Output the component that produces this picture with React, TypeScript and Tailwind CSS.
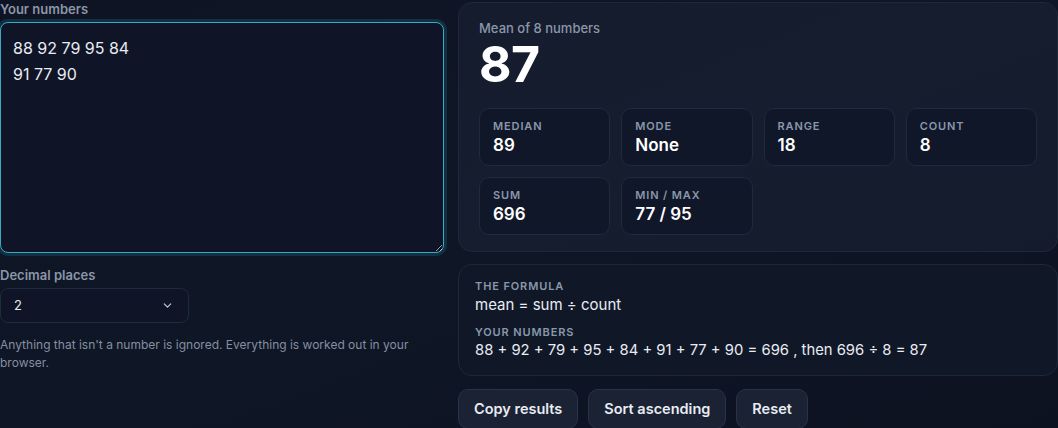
import { ChevronDown } from 'lucide-react'

const numbers = [88, 92, 79, 95, 84, 91, 77, 90]

const stats = [
  { label: 'Median', value: '89' },
  { label: 'Mode', value: 'None' },
  { label: 'Range', value: '18' },
  { label: 'Count', value: '8' },
  { label: 'Sum', value: '696' },
  { label: 'Min / Max', value: '77 / 95' },
]

function StatBox({ label, value }: { label: string; value: string }) {
  return (
    <div className="h-[58px] rounded-[10px] border border-[#1f2a3c] bg-[#0f1628]/80 px-[13px] pt-[10px]">
      <div className="text-[11px] font-semibold uppercase leading-[14px] tracking-[0.08em] text-[#8a97ab]">{label}</div>
      <div className="mt-[2px] text-[17px] font-semibold leading-[20px] text-white">{value}</div>
    </div>
  )
}

export default function App() {
  return (
    <div
      className="h-[428px] w-[1058px] overflow-hidden bg-gradient-to-br from-[#0e1423] via-[#0f1626] to-[#0c1220] text-white"
      style={{ fontFamily: 'Inter, "Noto Sans", sans-serif' }}
    >
      <div className="flex gap-[14px]">
        {/* left column */}
        <div className="w-[444px] shrink-0">
          <label className="block pt-[1px] text-[13px] font-semibold leading-[16px] text-[#8b96a8]">Your numbers</label>
          <textarea
            className="mt-[5px] block h-[231px] w-full resize-y rounded-[8px] border border-[#3aa9c4] bg-[#0f1526] px-[12px] pt-[12px] text-[16px] leading-[26px] text-[#e8ecf2] outline-none ring-[3px] ring-[#22d3ee]/15"
            defaultValue={'88 92 79 95 84\n91 77 90'}
          />
          <label className="mt-[14px] block text-[13px] font-semibold leading-[16px] text-[#8b96a8]">Decimal places</label>
          <div className="relative mt-[5px] flex h-[35px] w-[189px] items-center rounded-[8px] border border-[#1f2a3c] bg-[#0f1526] px-[13px]">
            <span className="text-[13px] text-[#e8ecf2]">2</span>
            <ChevronDown className="absolute right-[14px] top-[10px] h-[13px] w-[13px] text-[#c3cad6]" strokeWidth={2.2} />
          </div>
          <p className="mt-[13px] text-[12px] leading-[18px] text-[#848fa1]">
            Anything that isn't a number is ignored. Everything is worked out in your browser.
          </p>
        </div>

        {/* right column */}
        <div className="w-[600px] shrink-0 pt-[2px]">
          <div className="rounded-[14px] border border-[#1e283a] bg-gradient-to-br from-[#141c2e] via-[#151d2f] to-[#131b2c] px-[20px] pb-[16px] pt-[17px]">
            <div className="text-[13px] font-medium leading-[16px] text-[#8b96a8]">Mean of 8 numbers</div>
            <div className="mt-[0px] text-[50px] font-bold leading-[56px] tracking-[-0.01em] text-white">87</div>
            <div className="mt-[16px] grid grid-cols-4 gap-[11px]">
              {stats.map((s) => (
                <StatBox key={s.label} label={s.label} value={s.value} />
              ))}
            </div>
          </div>

          <div className="mt-[12px] rounded-[14px] border border-[#1e283a] bg-[#101727] px-[16px] pb-[15px] pt-[14px]">
            <div className="text-[11px] font-semibold uppercase leading-[14px] tracking-[0.08em] text-[#8a97ab]">The formula</div>
            <div className="mt-[2px] text-[15px] leading-[19px] text-[#e8ecf2]">mean = sum ÷ count</div>
            <div className="mt-[11px] text-[11px] font-semibold uppercase leading-[14px] tracking-[0.08em] text-[#8a97ab]">Your numbers</div>
            <div className="mt-[2px] text-[14.8px] leading-[19px] text-[#e8ecf2]">
              {numbers.join(' + ')} = 696 , then 696 ÷ 8 = 87
            </div>
          </div>

          <div className="mt-[13px] flex gap-[10px]">
            {['Copy results', 'Sort ascending', 'Reset'].map((b) => (
              <button
                key={b}
                className="h-[40px] rounded-[10px] border border-[#283347] bg-[#1a2234] px-[15px] text-[14.5px] font-semibold text-[#e8ecf2]"
              >
                {b}
              </button>
            ))}
          </div>
        </div>
      </div>
    </div>
  )
}
